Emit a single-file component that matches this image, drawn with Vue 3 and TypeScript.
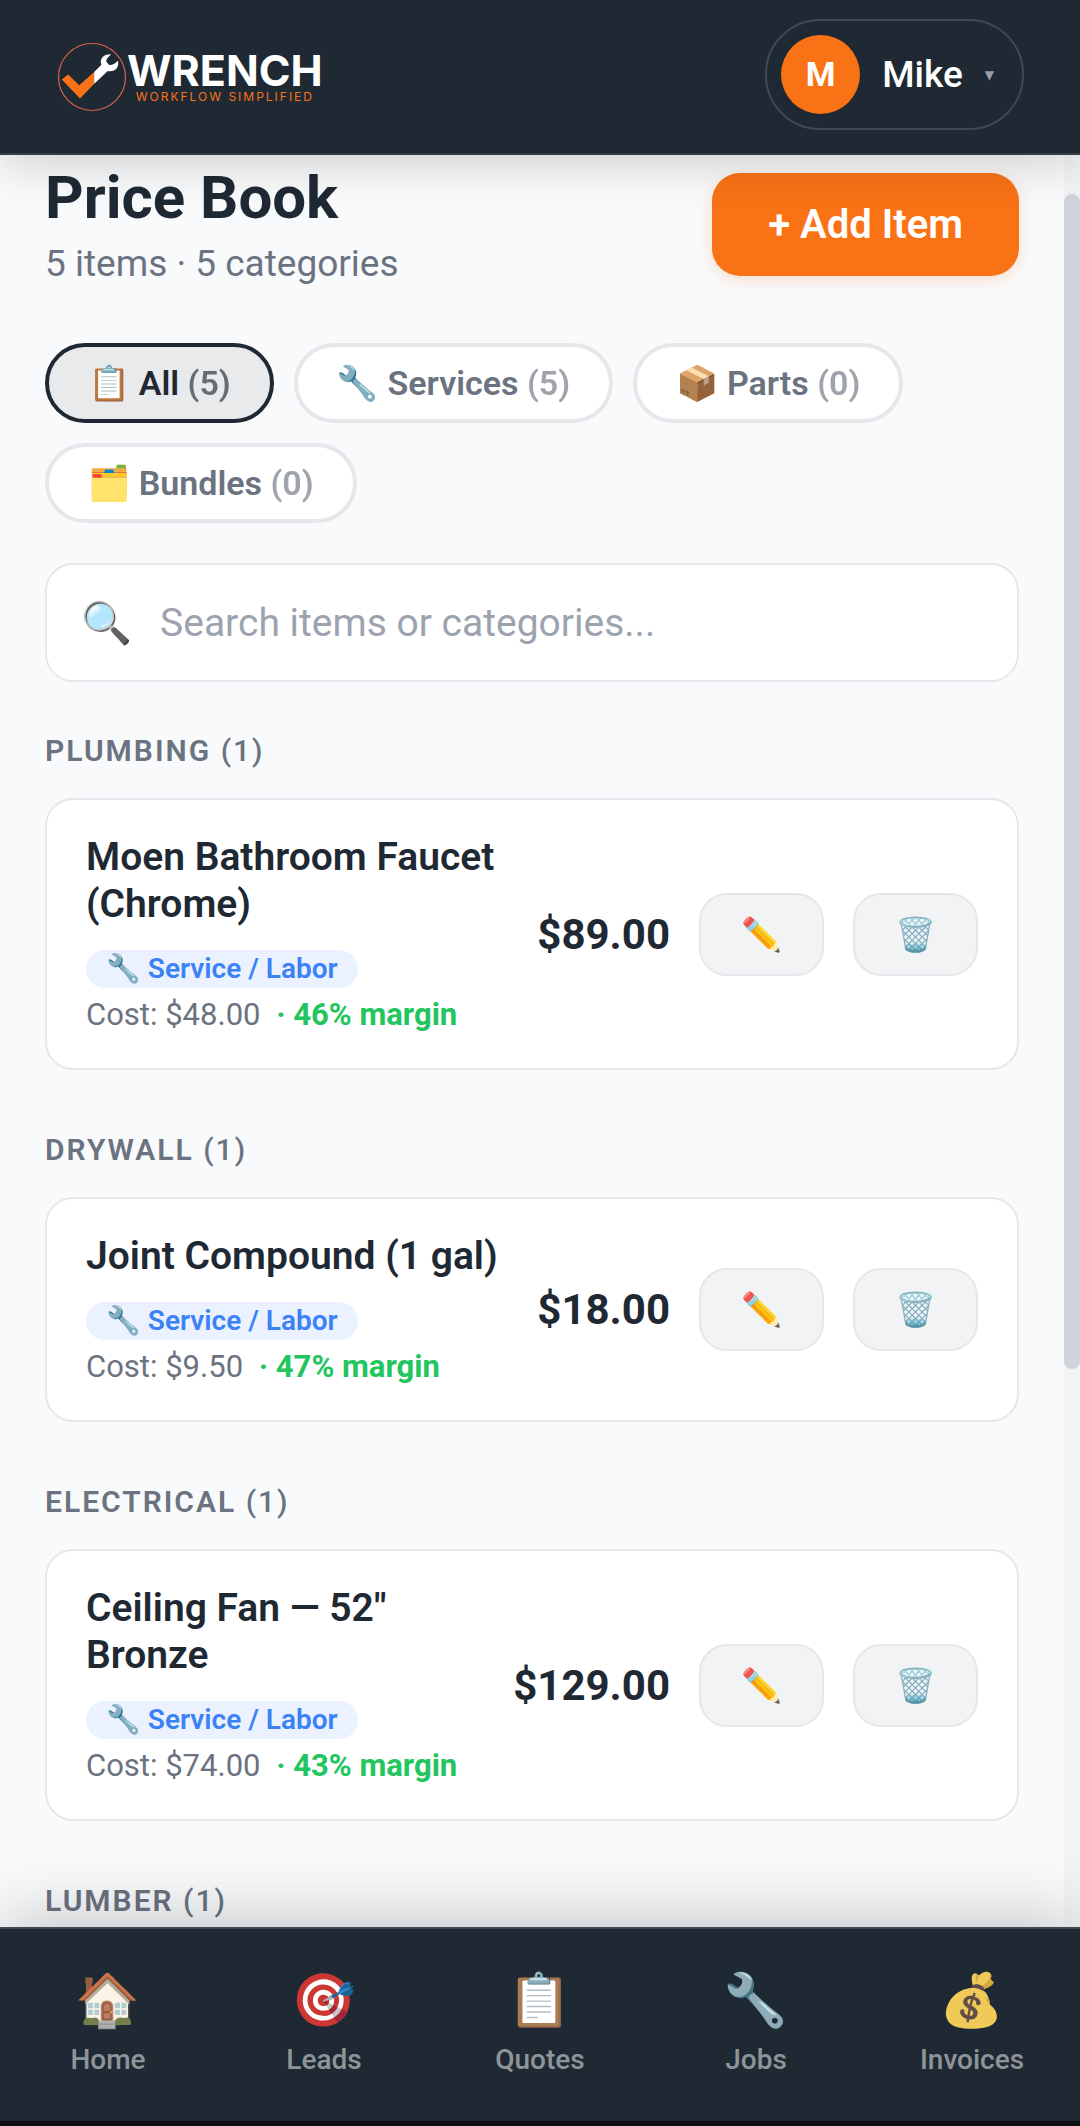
<script setup lang="ts">
import { ref } from 'vue'

interface Filter { icon: string; label: string; count: number }
interface Item { name: string; cost: string; margin: number; price: string }
interface Category { name: string; count: number; items: Item[] }
interface Tab { icon: string; label: string }

const filters: Filter[] = [
  { icon: '📋', label: 'All', count: 5 },
  { icon: '🔧', label: 'Services', count: 5 },
  { icon: '📦', label: 'Parts', count: 0 },
  { icon: '🗂️', label: 'Bundles', count: 0 },
]
const active = ref('All')
const query = ref('')

const categories: Category[] = [
  { name: 'Plumbing', count: 1, items: [{ name: 'Moen Bathroom Faucet (Chrome)', cost: '$48.00', margin: 46, price: '$89.00' }] },
  { name: 'Drywall', count: 1, items: [{ name: 'Joint Compound (1 gal)', cost: '$9.50', margin: 47, price: '$18.00' }] },
  { name: 'Electrical', count: 1, items: [{ name: 'Ceiling Fan — 52" Bronze', cost: '$74.00', margin: 43, price: '$129.00' }] },
  { name: 'Lumber', count: 1, items: [] },
]

const tabs: Tab[] = [
  { icon: '🏠', label: 'Home' },
  { icon: '🎯', label: 'Leads' },
  { icon: '📋', label: 'Quotes' },
  { icon: '🔧', label: 'Jobs' },
  { icon: '💰', label: 'Invoices' },
]
</script>

<template>
  <div class="app">
    <header class="topbar">
      <a class="logo" href="#" aria-label="Wrench home">
        <svg class="mark" viewBox="0 0 70 70" aria-hidden="true">
          <circle cx="35" cy="35" r="33.5" fill="none" stroke="#d9634a" stroke-width="1.2" />
          <path d="M4.8 37.5 11.2 32.5 22.2 43.2 37.2 30V41.8L23 56.6Z" fill="#f97316" />
          <path d="M37.2 30 44.4 22.8C42 17 46.5 12 54 12.2L50 16.6Q48.5 18.5 50.2 20.8L52.2 23Q55.5 23.4 57.7 21.6L61 18.8C62.5 25.5 58 30.5 50.8 29L37.200 41.800Z" fill="#fff" />
        </svg>
        <span class="wordmark">
          <span class="brand">WRENCH</span>
          <span class="tagline">WORKFLOW SIMPLIFIED</span>
        </span>
      </a>
      <button class="user" type="button">
        <span class="avatar">M</span>
        <span class="user-name">Mike</span>
        <span class="caret">▼</span>
      </button>
    </header>

    <div class="viewport">
      <main class="page">
        <div class="heading">
          <div>
            <h1>Price Book</h1>
            <p class="summary">5 items · 5 categories</p>
          </div>
          <button class="add" type="button">+ Add Item</button>
        </div>

        <div class="filters">
          <button
            v-for="f in filters"
            :key="f.label"
            type="button"
            class="chip"
            :class="{ active: active === f.label }"
            @click="active = f.label"
          >{{ f.icon }} {{ f.label }} <span class="count">({{ f.count }})</span></button>
        </div>

        <label class="search">
          <span class="search-icon" aria-hidden="true">🔍</span>
          <input v-model="query" type="text" placeholder="Search items or categories..." aria-label="Search items or categories" />
        </label>

        <section v-for="c in categories" :key="c.name" class="category">
          <h2>{{ c.name }} <span>({{ c.count }})</span></h2>
          <article v-for="i in c.items" :key="i.name" class="card">
            <div class="info">
              <h3>{{ i.name }}</h3>
              <span class="badge">🔧 Service / Labor</span>
              <p class="cost">Cost: {{ i.cost }} <span class="margin">· {{ i.margin }}% margin</span></p>
            </div>
            <span class="price">{{ i.price }}</span>
            <button class="action" type="button" :aria-label="'Edit ' + i.name">✏️</button>
            <button class="action" type="button" :aria-label="'Delete ' + i.name">🗑️</button>
          </article>
        </section>
      </main>
      <div class="rail" aria-hidden="true"><div class="thumb"></div></div>
    </div>

    <nav class="tabs">
      <a v-for="t in tabs" :key="t.label" href="#">
        <span class="tab-icon" aria-hidden="true">{{ t.icon }}</span>
        <span>{{ t.label }}</span>
      </a>
    </nav>
  </div>
</template>

<style>
body {
  background: #0f0f17;
}
</style>

<style scoped>
* {
  box-sizing: border-box;
}
.app {
  display: flex;
  flex-direction: column;
  height: 100vh;
  padding-bottom: 5px;
  background: #0f0f17;
  color: #1f2933;
  font-family: Roboto, "Noto Color Emoji", sans-serif;
}
button {
  font-family: inherit;
  cursor: pointer;
}
h1, h2, h3, p {
  margin: 0;
}
a {
  text-decoration: none;
}

.topbar {
  position: relative;
  z-index: 2;
  display: flex;
  flex: none;
  align-items: center;
  justify-content: space-between;
  padding: 19px 56px 23px 57px;
  background: #1f2933;
  border-bottom: 2px solid #353e47;
  box-shadow: 0 11px 44px rgba(0, 0, 0, 0.16);
}
.logo {
  display: flex;
  align-items: center;
  margin-top: 4px;
}
.mark {
  width: 70px;
  height: 70px;
}
.wordmark {
  display: flex;
  flex-direction: column;
  align-items: center;
  font-family: Inter, sans-serif;
}
.brand {
  color: #fff;
  font-size: 43px;
  font-weight: 700;
  line-height: 40px;
}
.tagline {
  color: #f97316;
  font-size: 12px;
  letter-spacing: 2px;
  line-height: 14px;
}
.user {
  display: flex;
  align-items: center;
  gap: 22px;
  padding: 14px 28px 14px 14px;
  background: transparent;
  border: 2px solid #3f4952;
  border-radius: 55px;
  color: #fff;
}
.avatar {
  width: 79px;
  height: 79px;
  border-radius: 50%;
  background: #f97316;
  font-size: 34px;
  font-weight: 700;
  line-height: 79px;
  text-align: center;
}
.user-name {
  font-size: 37px;
  font-weight: 500;
}
.caret {
  color: #9a9ea3;
  font-family: "DejaVu Sans", sans-serif;
  font-size: 12px;
}

.viewport {
  display: flex;
  flex: 1;
  min-height: 0;
  overflow: hidden;
  background: #f9fafc;
}
.page {
  flex: 1;
  min-width: 0;
  padding: 8px 45px 0;
}
.rail {
  flex: none;
  width: 16px;
  padding-top: 39px;
  background: #f2f3f5;
}
.thumb {
  height: 67.8%;
  border-radius: 8px;
  background: #d1d3db;
}

.heading {
  display: flex;
  align-items: center;
  justify-content: space-between;
}
h1 {
  font-size: 60px;
  font-weight: 700;
  line-height: 70px;
}
.summary {
  margin-top: 10px;
  color: #6b7280;
  font-size: 37px;
  line-height: 42px;
}
.add {
  padding: 28px 56px;
  background: #f97316;
  border: 0;
  border-radius: 28px;
  box-shadow: 0 4px 16px rgba(249, 115, 22, 0.2);
  color: #fff;
  font-size: 40px;
  font-weight: 600;
  line-height: 47px;
}

.filters {
  display: flex;
  flex-wrap: wrap;
  gap: 20px;
  margin-top: 58px;
}
.chip {
  height: 80px;
  padding: 0 39px;
  background: #fff;
  border: 4px solid #e5e7eb;
  border-radius: 40px;
  color: #6b7280;
  font-size: 34px;
  font-weight: 600;
  line-height: 40px;
  white-space: nowrap;
}
.chip.active {
  background: #e9eaeb;
  border-color: #1f2933;
  color: #1f2933;
}
.count {
  opacity: 0.65;
}

.search {
  display: flex;
  align-items: center;
  gap: 28px;
  height: 119px;
  margin-top: 40px;
  padding: 0 34px;
  background: #fff;
  border: 2px solid #e5e7eb;
  border-radius: 28px;
}
.search-icon {
  font-size: 41px;
}
.search input {
  flex: 1;
  min-width: 0;
  padding: 0;
  background: transparent;
  border: 0;
  outline: 0;
  color: #1f2933;
  font-family: inherit;
  font-size: 39px;
}
.search input::placeholder {
  color: #9ca3af;
  opacity: 1;
}

.category {
  margin-top: 51px;
}
.category + .category {
  margin-top: 62px;
}
h2 {
  color: #6b7280;
  font-size: 30px;
  font-weight: 600;
  letter-spacing: 2px;
  line-height: 36px;
  text-transform: uppercase;
}
h2 span {
  font-weight: 500;
}
.card {
  display: flex;
  align-items: center;
  gap: 29px;
  margin-top: 29px;
  padding: 34px 39px;
  background: #fff;
  border: 2px solid #e5e7eb;
  border-radius: 28px;
}
.info {
  flex: 1;
  min-width: 0;
}
h3 {
  font-size: 39px;
  font-weight: 600;
  line-height: 47px;
}
.badge {
  display: block;
  width: fit-content;
  margin-top: 22px;
  padding: 0 20px;
  background: #ebf1fe;
  border-radius: 19px;
  color: #3b82f6;
  font-size: 28px;
  font-weight: 600;
  line-height: 38px;
}
.cost {
  margin-top: 8px;
  color: #6b7280;
  font-size: 31px;
  line-height: 38px;
}
.margin {
  margin-left: 8px;
  color: #22c55e;
  font-weight: 700;
}
.price {
  font-size: 42px;
  font-weight: 700;
}
.action {
  width: 125px;
  height: 83px;
  padding: 0;
  background: #f2f3f5;
  border: 2px solid #e5e7eb;
  border-radius: 28px;
  font-size: 33px;
}

.tabs {
  position: relative;
  z-index: 2;
  display: grid;
  flex: none;
  grid-template-columns: repeat(5, 1fr);
  padding: 40px 0 44px;
  background: #1f2933;
  border-top: 2px solid #3f4952;
  box-shadow: 0 -11px 66px rgba(0, 0, 0, 0.2);
}
.tabs a {
  display: flex;
  flex-direction: column;
  align-items: center;
  gap: 10px;
  color: #8f9499;
  font-size: 28px;
  font-weight: 500;
  line-height: 34px;
}
.tab-icon {
  filter: grayscale(0.3);
  font-size: 52px;
  line-height: 64px;
}
</style>
